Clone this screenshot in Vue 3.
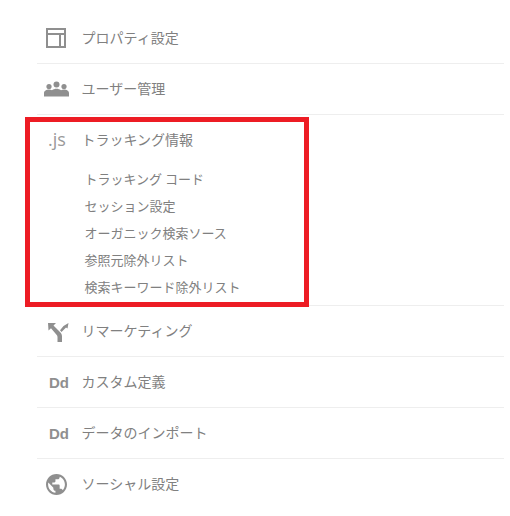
<script setup>
const subs = ['トラッキング コード', 'セッション設定', 'オーガニック検索ソース', '参照元除外リスト', '検索キーワード除外リスト']
</script>

<template>
  <div class="page">
    <ul class="menu">
      <li class="row">
        <span class="icon">
          <svg width="20" height="20" viewBox="0 0 20 20"><path fill="#8f8f8f" fill-rule="evenodd" d="M0 0h20v20H0zM2 2v3h16V2zM2 7v11h11V7zM15 7v11h3V7z"/></svg>
        </span>
        <span class="label">プロパティ設定</span>
      </li>
      <li class="row">
        <span class="icon wide">
          <svg width="25" height="16" viewBox="0 0 25 16"><g fill="#8f8f8f"><circle cx="5" cy="5.500" r="2.600"/><circle cx="12.500" cy="3.500" r="3"/><circle cx="20" cy="5.500" r="2.600"/><path d="M0 15.500v-3.500c0-2 2.500-3.500 5-3.500 1.200 0 2.200.3 3 .8 1.300-1 3-1.500 4.500-1.500s3.200.5 4.500 1.500c.8-.5 1.800-.8 3-.8 2.500 0 5 1.500 5 3.500v3.500z"/></g></svg>
        </span>
        <span class="label">ユーザー管理</span>
      </li>
      <li class="row open">
        <div class="head">
          <span class="icon js">.js</span>
          <span class="label">トラッキング情報</span>
        </div>
        <ul class="subs">
          <li v-for="s in subs" :key="s" class="sub">{{ s }}</li>
        </ul>
        <div class="mark"></div>
      </li>
      <li class="row">
        <span class="icon fork">
          <svg width="21" height="19" viewBox="0 0 21 19"><g fill="#8f8f8f"><path d="M0 0h8L5.500 2.500 12 9c1.300 1.300 2 2.700 2 4.500V19H9.500v-5c0-1-.4-1.700-1-2.300L3 5.200.5 7.500z"/><path d="M15.500 3 20.500 0 19.500 5.500 18 4.500 13.500 9 12 7.300z"/></g></svg>
        </span>
        <span class="label">リマーケティング</span>
      </li>
      <li class="row">
        <span class="icon dd">Dd</span>
        <span class="label">カスタム定義</span>
      </li>
      <li class="row">
        <span class="icon dd">Dd</span>
        <span class="label">データのインポート</span>
      </li>
      <li class="row last">
        <span class="icon">
          <svg width="21" height="21" viewBox="2 2 20 20"><path fill="#8f8f8f" d="M12 2C6.480 2 2 6.480 2 12s4.480 10 10 10 10-4.480 10-10S17.520 2 12 2zm-1 17.930c-3.950-.49-7-3.850-7-7.930 0-.62.080-1.210.210-1.790L9 15v1c0 1.100.9 2 2 2v1.930zm6.900-2.540c-.26-.81-1-1.390-1.900-1.390h-1v-3c0-.55-.45-1-1-1H8v-2h2c.55 0 1-.45 1-1V7h2c1.100 0 2-.9 2-2v-.41c2.930 1.190 5 4.060 5 7.410 0 2.080-.8 3.970-2.100 5.390z"/></svg>
        </span>
        <span class="label">ソーシャル設定</span>
      </li>
    </ul>
  </div>
</template>

<style scoped>
.page {
  width: 510px;
  height: 516px;
  padding: 13px 6px 0 37px;
  box-sizing: border-box;
  background: #fff;
  overflow: hidden;
  font-family: "Noto Sans CJK JP", "Noto Sans", sans-serif;
  font-size: 14px;
  color: #808080;
}
.menu, .subs {
  list-style: none;
  margin: 0;
  padding: 0;
}
.row {
  display: flex;
  align-items: center;
  height: 50px;
  border-bottom: 1px solid #eeeeee;
}
.row.last {
  border-bottom: 0;
}
.row.open {
  display: block;
  position: relative;
  height: 190px;
}
.head {
  display: flex;
  align-items: center;
  height: 50px;
}
.icon {
  flex: none;
  width: 45px;
  padding-left: 9px;
  box-sizing: border-box;
  display: flex;
  align-items: center;
  line-height: 1;
  color: #8f8f8f;
  margin-right: -0.5px;
}
.wide {
  padding-left: 7px;
}
.fork {
  padding-left: 11px;
  margin-top: 3px;
}
.label {
  line-height: 20px;
  margin-top: -2px;
}
.js {
  font-family: "Open Sans", sans-serif;
  font-size: 18px;
  padding-left: 11px;
  margin-top: -2px;
  color: #9a9a9a;
}
.dd {
  font-family: "Liberation Sans", sans-serif;
  font-weight: 700;
  font-size: 15px;
  padding-left: 12px;
  margin-top: 1px;
}
.subs {
  padding: 1px 0 0 47.500px;
  font-size: 13px;
}
.sub {
  height: 27px;
  line-height: 25px;
}
.mark {
  position: absolute;
  left: -12px;
  top: 2px;
  width: 274px;
  height: 180px;
  border: 5px solid #ed1c24;
}
</style>
